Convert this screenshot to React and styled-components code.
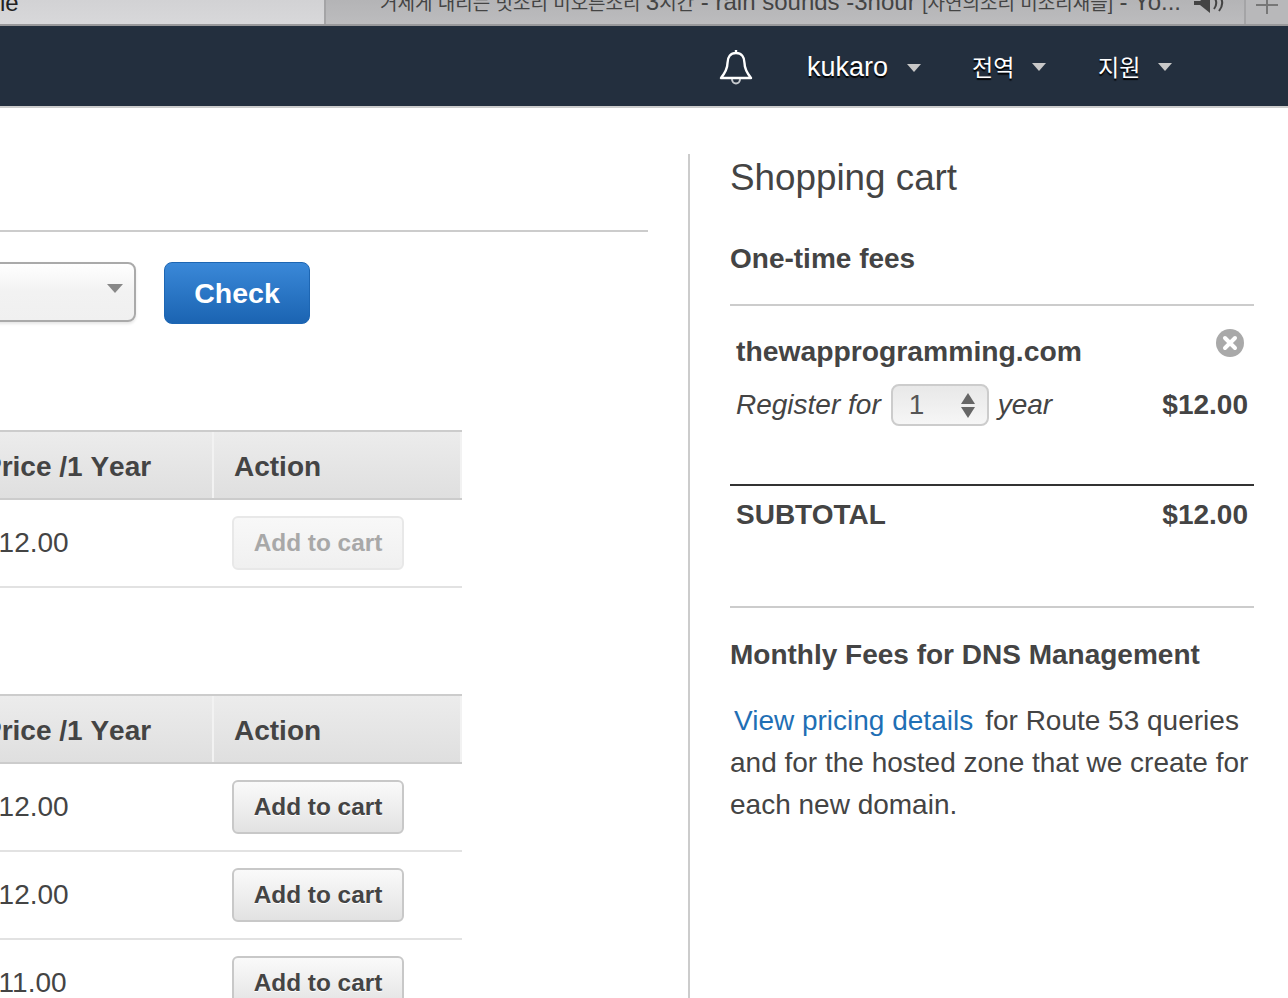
import styled, { createGlobalStyle } from 'styled-components';

const Global = createGlobalStyle`
  html, body { margin: 0; padding: 0; background: #fff; }
  * { box-sizing: border-box; }
  body {
    font-family: "Liberation Sans", "Noto Sans CJK KR", Arial, sans-serif;
    color: #444;
    -webkit-font-smoothing: antialiased;
  }
`;

const Page = styled.div`
  width: 1288px;
  height: 998px;
  overflow: hidden;
  display: flex;
  flex-direction: column;
`;

const TabBar = styled.div`
  height: 26px;
  display: flex;
  flex: none;
  overflow: hidden;
  background: #b8b8ba;
  border-bottom: 2px solid #98989a;
`;

const Tab = styled.div`
  height: 24px;
  width: ${(p) => p.$width}px;
  flex: none;
  display: flex;
  align-items: center;
  font-size: 24px;
  line-height: 24px;
  white-space: nowrap;
  overflow: hidden;
  padding-left: ${(p) => p.$pad}px;
  background: ${(p) => (p.$active ? 'linear-gradient(#d2d2d4, #d8d8da)' : 'linear-gradient(#b4b4b6, #bcbcbe)')};
  border-right: 2px solid #a4a4a6;
`;

const TabLabel = styled.span`
  position: relative;
  top: -${(p) => p.$lift}px;
  color: ${(p) => (p.$active ? '#222' : '#444')};
`;

const TabHangul = styled.span`
  font-size: 19px;
`;

const SpeakerIcon = styled.svg`
  flex: none;
  margin-left: 13px;
  margin-top: -14px;
`;

const NewTab = styled.div`
  flex: 1;
  display: flex;
  justify-content: center;
`;

const Nav = styled.nav`
  height: 82px;
  flex: none;
  background: #232f3e;
  border-bottom: 2px solid #ccc;
  display: flex;
  align-items: center;
  padding-left: 718px;
  color: #fff;
`;

const NavBell = styled.div`
  width: 36px;
  height: 40px;
  margin-right: 53px;
  display: flex;
`;

const NavItem = styled.div`
  display: flex;
  align-items: center;
  font-size: ${(p) => p.$size}px;
  width: ${(p) => p.$width}px;
  padding-top: ${(p) => p.$drop || 0}px;
  text-shadow: 0 2px 1px #000;
  white-space: nowrap;
`;

const Caret = styled.span`
  width: 0;
  height: 0;
  margin-left: ${(p) => p.$gap}px;
  margin-top: 2px;
  border-left: 7px solid transparent;
  border-right: 7px solid transparent;
  border-top: 8px solid #c8c8c8;
`;

const Main = styled.div`
  flex: 1;
  display: flex;
  padding-top: 46px;
  min-height: 0;
`;

const LeftColumn = styled.section`
  width: 690px;
  flex: none;
  border-right: 2px solid #ccc;
  padding-top: 76px;
  overflow: hidden;
`;

const Rule = styled.hr`
  margin: ${(p) => p.$top || 0}px 0 0;
  border: 0;
  height: 2px;
  background: ${(p) => p.$color || '#ccc'};
  width: ${(p) => (p.$width ? `${p.$width}px` : 'auto')};
`;

const CheckRow = styled.div`
  display: flex;
  align-items: flex-start;
  gap: 28px;
  margin-top: 30px;
  margin-left: -64px;
`;

const SelectBox = styled.div`
  width: 200px;
  height: 60px;
  border: 2px solid #aaa;
  border-radius: 8px;
  background: linear-gradient(#fff, #f2f2f2 50%, #f0f0f0);
  box-shadow: 0 2px 3px rgba(0, 0, 0, 0.1);
  display: flex;
  justify-content: flex-end;
  padding: 20px 11px 0 0;
`;

const SelectArrow = styled.span`
  width: 0;
  height: 0;
  border-left: 8px solid transparent;
  border-right: 8px solid transparent;
  border-top: 9px solid #888;
`;

const CheckButton = styled.button`
  width: 146px;
  height: 62px;
  border: 1px solid #1d66b3;
  border-radius: 8px;
  background: linear-gradient(#3a88d8, #1b64b2);
  color: #fff;
  font: bold 28.5px "Liberation Sans", sans-serif;
  padding: 1px 0 0;
`;

const Table = styled.div`
  width: 479px;
  margin-left: -17px;
  margin-top: ${(p) => p.$top}px;
`;

const HeadRow = styled.div`
  height: 70px;
  display: grid;
  grid-template-columns: 229px 250px;
  border-top: 2px solid #ccc;
  border-bottom: 2px solid #ccc;
  background: linear-gradient(#ececec, #dfdfdf);
`;

const HeadCell = styled.div`
  display: flex;
  align-items: center;
  font-size: 28px;
  font-weight: bold;
  font-kerning: none;
  color: #444;
  padding-top: 3px;
  padding-left: ${(p) => (p.$action ? '20px' : '0')};
  border-left: ${(p) => (p.$action ? '2px solid #f2f2f2' : '0')};
  border-right: ${(p) => (p.$action ? '2px solid #f2f2f2' : '0')};
`;

const Row = styled.div`
  height: 88px;
  display: grid;
  grid-template-columns: 229px 250px;
  align-items: center;
  border-bottom: 2px solid #e2e2e2;
  font-size: 28px;
  color: #444;
`;

const ActionCell = styled.div`
  padding-left: 20px;
  display: flex;
`;

const CartButton = styled.button`
  width: 172px;
  height: 54px;
  padding: 0;
  border-radius: 6px;
  font: bold 24.4px "Liberation Sans", sans-serif;
  border: 2px solid ${(p) => (p.disabled ? '#e8e8e8' : '#c8c8c8')};
  color: ${(p) => (p.disabled ? '#a8a8a8' : '#444')};
  background: ${(p) => (p.disabled ? 'linear-gradient(#f8f8f8, #f0f0f0)' : 'linear-gradient(#fafafa, #e2e2e2)')};
  text-shadow: ${(p) => (p.disabled ? 'none' : '0 1px 0 #fff')};
`;

const Cart = styled.aside`
  width: 524px;
  margin-left: 40px;
  flex: none;
`;

const CartTitle = styled.h1`
  margin: 0;
  height: 48px;
  font-size: 36.8px;
  font-weight: normal;
  line-height: 48px;
  color: #444;
`;

const SectionTitle = styled.h2`
  margin: ${(p) => p.$top}px 0 ${(p) => p.$bottom}px;
  font-size: 28px;
  line-height: 36px;
  font-weight: bold;
  color: #444;
`;

const LineItem = styled.div`
  padding: 0 6px;
`;

const DomainRow = styled.div`
  display: flex;
  justify-content: space-between;
  align-items: flex-start;
  height: 60px;
  padding-top: 27px;
  font-size: 28.3px;
  line-height: 36px;
  font-weight: bold;
`;

const RemoveIcon = styled.div`
  margin-right: 4px;
  margin-top: -4px;
  width: 28px;
  height: 28px;
  display: flex;
`;

const RegisterRow = styled.div`
  display: flex;
  align-items: center;
  height: 44px;
  margin-top: 17px;
  font-size: 28px;
  font-style: italic;
`;

const Stepper = styled.div`
  width: 98px;
  height: 42px;
  margin: 0 9px 0 10px;
  border: 2px solid #ccc;
  border-radius: 8px;
  background: linear-gradient(#e8e8e8, #f6f6f6);
  display: flex;
  align-items: center;
  justify-content: space-between;
  padding: 0 12px 0 16px;
  font-style: normal;
  color: #555;
`;

const StepArrows = styled.div`
  display: flex;
  flex-direction: column;
  gap: 3px;
`;

const StepArrow = styled.span`
  width: 0;
  height: 0;
  border-left: 7px solid transparent;
  border-right: 7px solid transparent;
  border-${(p) => (p.$up ? 'bottom' : 'top')}: 11px solid #666;
`;

const Amount = styled.span`
  margin-left: auto;
  font-style: normal;
  font-weight: bold;
`;

const SubtotalRow = styled.div`
  display: flex;
  justify-content: space-between;
  align-items: center;
  height: 56px;
  padding: 2px 6px 0;
  font-size: 28px;
  font-weight: bold;
`;

const Paragraph = styled.p`
  margin: 27px 0 0;
  font-size: 28px;
  line-height: 42px;
  color: #444;
`;

const Link = styled.a`
  color: #1f6fb5;
  margin: 0 12px 0 4px;
`;

const priceRows = ['$12.00', '$12.00', '$11.00'];

function BellIcon() {
  return (
    <svg width="36" height="40" viewBox="0 0 36 40" fill="none" stroke="#fff" strokeWidth="2.4" strokeLinejoin="round">
      <path d="M18 4v3M18 7c-5.500 0-8.500 4-8.500 10 0 6-2.500 10-6.500 15h30c-4-5-6.500-9-6.500-15 0-6-3-10-8.500-10z" />
      <path d="M14 33c0 3 2 4.500 4 4.500s4-1.500 4-4.500" strokeWidth="2" stroke="#c8ccd0" />
    </svg>
  );
}

function RemoveGlyph() {
  return (
    <svg width="28" height="28" viewBox="0 0 28 28">
      <circle cx="14" cy="14" r="14" fill="#a9a9a9" />
      <path d="M9 9l10 10M19 9L9 19" stroke="#fff" strokeWidth="4" strokeLinecap="round" />
    </svg>
  );
}

function App() {
  return (
    <Page>
      <Global />
      <TabBar>
        <Tab $width={326} $pad={0} $active>
          <TabLabel $lift={9} $active>le</TabLabel>
        </Tab>
        <Tab $width={920} $pad={54}>
          <TabLabel $lift={9}>
            <TabHangul>거세게 내리는 빗소리 미오른소리 </TabHangul>3<TabHangul>시간</TabHangul> - rain sounds -3hour <TabHangul>[자연의소리 미소리새들]</TabHangul> - Yo...
          </TabLabel>
          <SpeakerIcon width="32" height="16" viewBox="0 0 32 16" fill="none">
            <path d="M0 4h6l10-8v20L6 8H0z" fill="#444" />
            <path d="M20 0c3 4 3 8 0 12M25 -2c4 5 4 11 0 16" stroke="#444" strokeWidth="2" />
          </SpeakerIcon>
        </Tab>
        <NewTab>
          <svg width="22" height="14" viewBox="0 0 22 14" stroke="#777" strokeWidth="2"><path d="M11 0v14M0 5h22" /></svg>
        </NewTab>
      </TabBar>
      <Nav>
        <NavBell><BellIcon /></NavBell>
        <NavItem $width={165} $size={27} $drop={2}>kukaro<Caret $gap={19} /></NavItem>
        <NavItem $width={126} $size={23}>전역<Caret $gap={18} /></NavItem>
        <NavItem $width={90} $size={23}>지원<Caret $gap={18} /></NavItem>
      </Nav>
      <Main>
        <LeftColumn>
          <Rule $width={648} />
          <CheckRow>
            <SelectBox><SelectArrow /></SelectBox>
            <CheckButton>Check</CheckButton>
          </CheckRow>
          <Table $top={106}>
            <HeadRow>
              <HeadCell>Price /1 Year</HeadCell>
              <HeadCell $action>Action</HeadCell>
            </HeadRow>
            <Row>
              <div>$12.00</div>
              <ActionCell><CartButton disabled>Add to cart</CartButton></ActionCell>
            </Row>
          </Table>
          <Table $top={106}>
            <HeadRow>
              <HeadCell>Price /1 Year</HeadCell>
              <HeadCell $action>Action</HeadCell>
            </HeadRow>
            {priceRows.map((price, i) => (
              <Row key={i}>
                <div>{price}</div>
                <ActionCell><CartButton>Add to cart</CartButton></ActionCell>
              </Row>
            ))}
          </Table>
        </LeftColumn>
        <Cart>
          <CartTitle>Shopping cart</CartTitle>
          <SectionTitle $top={39} $bottom={27}>One-time fees</SectionTitle>
          <Rule />
          <LineItem>
            <DomainRow>
              thewapprogramming.com
              <RemoveIcon><RemoveGlyph /></RemoveIcon>
            </DomainRow>
            <RegisterRow>
              Register for
              <Stepper>
                1
                <StepArrows><StepArrow $up /><StepArrow /></StepArrows>
              </Stepper>
              year
              <Amount>$12.00</Amount>
            </RegisterRow>
          </LineItem>
          <Rule $color="#333" $top={57} />
          <SubtotalRow>
            <span>SUBTOTAL</span>
            <span>$12.00</span>
          </SubtotalRow>
          <Rule $top={64} />
          <SectionTitle $top={29} $bottom={0}>Monthly Fees for DNS Management</SectionTitle>
          <Paragraph>
            <Link>View pricing details</Link>for Route 53 queries and for the hosted zone that we create for each new domain.
          </Paragraph>
        </Cart>
      </Main>
    </Page>
  );
}

export default App;
